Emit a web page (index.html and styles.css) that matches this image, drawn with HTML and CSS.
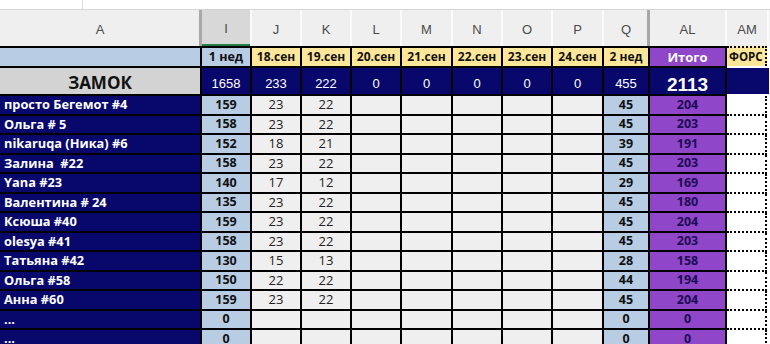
FILE: index.html
```html
<!DOCTYPE html>
<html lang="ru">
<head>
<meta charset="utf-8">
<link rel="stylesheet" href="styles.css">
</head>
<body>
<div class="topbar"><div class="namebox"></div></div>
<div class="colhead">
  <div class="ch">A</div><div class="ch sel frz">I</div><div class="ch">J</div><div class="ch">K</div><div class="ch">L</div><div class="ch">M</div><div class="ch">N</div><div class="ch">O</div><div class="ch">P</div><div class="ch">Q</div><div class="ch frz">AL</div><div class="ch">AM</div><div class="ch"></div>
</div>
<div class="sheet">
  <div class="lb"></div><div class="lb b">1 нед</div><div class="y">18.сен</div><div class="y">19.сен</div><div class="y">20.сен</div><div class="y">21.сен</div><div class="y">22.сен</div><div class="y">23.сен</div><div class="y">24.сен</div><div class="y">2 нед</div><div class="ph">Итого</div><div class="y fh">ФОРС</div>
  <div class="castle">ЗАМОК</div><div class="nv">1658</div><div class="nv">233</div><div class="nv">222</div><div class="nv">0</div><div class="nv">0</div><div class="nv">0</div><div class="nv">0</div><div class="nv">0</div><div class="nv">455</div><div class="nv big">2113</div><div class="nv am"></div>

  <div class="nm">просто Бегемот #4</div><div class="lb b">159</div><div class="e">23</div><div class="e">22</div><div class="e"></div><div class="e"></div><div class="e"></div><div class="e"></div><div class="e"></div><div class="lb b">45</div><div class="t">204</div><div class="f"></div>
  <div class="nm">Ольга # 5</div><div class="lb b">158</div><div class="e">23</div><div class="e">22</div><div class="e"></div><div class="e"></div><div class="e"></div><div class="e"></div><div class="e"></div><div class="lb b">45</div><div class="t">203</div><div class="f"></div>
  <div class="nm">nikaruqa (Ника) #6</div><div class="lb b">152</div><div class="e">18</div><div class="e">21</div><div class="e"></div><div class="e"></div><div class="e"></div><div class="e"></div><div class="e"></div><div class="lb b">39</div><div class="t">191</div><div class="f"></div>
  <div class="nm">Залина&nbsp; #22</div><div class="lb b">158</div><div class="e">23</div><div class="e">22</div><div class="e"></div><div class="e"></div><div class="e"></div><div class="e"></div><div class="e"></div><div class="lb b">45</div><div class="t">203</div><div class="f"></div>
  <div class="nm">Yana #23</div><div class="lb b">140</div><div class="e">17</div><div class="e">12</div><div class="e"></div><div class="e"></div><div class="e"></div><div class="e"></div><div class="e"></div><div class="lb b">29</div><div class="t">169</div><div class="f"></div>
  <div class="nm">Валентина # 24</div><div class="lb b">135</div><div class="e">23</div><div class="e">22</div><div class="e"></div><div class="e"></div><div class="e"></div><div class="e"></div><div class="e"></div><div class="lb b">45</div><div class="t">180</div><div class="f"></div>
  <div class="nm">Ксюша #40</div><div class="lb b">159</div><div class="e">23</div><div class="e">22</div><div class="e"></div><div class="e"></div><div class="e"></div><div class="e"></div><div class="e"></div><div class="lb b">45</div><div class="t">204</div><div class="f"></div>
  <div class="nm">olesya #41</div><div class="lb b">158</div><div class="e">23</div><div class="e">22</div><div class="e"></div><div class="e"></div><div class="e"></div><div class="e"></div><div class="e"></div><div class="lb b">45</div><div class="t">203</div><div class="f"></div>
  <div class="nm">Татьяна #42</div><div class="lb b">130</div><div class="e">15</div><div class="e">13</div><div class="e"></div><div class="e"></div><div class="e"></div><div class="e"></div><div class="e"></div><div class="lb b">28</div><div class="t">158</div><div class="f"></div>
  <div class="nm">Ольга #58</div><div class="lb b">150</div><div class="e">22</div><div class="e">22</div><div class="e"></div><div class="e"></div><div class="e"></div><div class="e"></div><div class="e"></div><div class="lb b">44</div><div class="t">194</div><div class="f"></div>
  <div class="nm">Анна #60</div><div class="lb b">159</div><div class="e">23</div><div class="e">22</div><div class="e"></div><div class="e"></div><div class="e"></div><div class="e"></div><div class="e"></div><div class="lb b">45</div><div class="t">204</div><div class="f"></div>
  <div class="nm">...</div><div class="lb b">0</div><div class="e"></div><div class="e"></div><div class="e"></div><div class="e"></div><div class="e"></div><div class="e"></div><div class="e"></div><div class="lb b">0</div><div class="t">0</div><div class="f"></div>
  <div class="nm">...</div><div class="lb b">0</div><div class="e"></div><div class="e"></div><div class="e"></div><div class="e"></div><div class="e"></div><div class="e"></div><div class="e"></div><div class="lb b">0</div><div class="t">0</div><div class="f"></div>
</div>
</body>
</html>
```

FILE: styles.css
```css
* { box-sizing: border-box; }
html, body { margin: 0; padding: 0; background: #fff; }
body {
  width: 770px;
  height: 344px;
  overflow: hidden;
  font-family: "Open Sans", "Noto Sans", sans-serif;
}
.topbar {
  height: 10px;
  border-bottom: 1px solid #d6d6d6;
  background: #fff;
}
.namebox {
  width: 83px;
  height: 9px;
  border-right: 1px solid #dcdcdc;
}
.colhead {
  display: grid;
  grid-template-columns: 200px 48px 48px 48px 48px 49px 48px 48px 49px 44px 75px 40px 1fr;
  column-gap: 2px;
  height: 36px;
  background: #fbfbfb;
}
.ch {
  background: #efefef;
  color: #4a4a4a;
  font-family: "Liberation Sans", Arial, sans-serif;
  font-size: 13px;
  display: flex;
  align-items: center;
  justify-content: center;
  padding-top: 3px;
}
.ch.frz { box-shadow: -3px 0 0 #a8a8a8; }
.ch.sel {
  background: #d8d8d8;
  border-bottom: 2px solid #21804a;
}
.sheet {
  display: grid;
  grid-template-columns: 200px 48px 48px 48px 48px 49px 48px 48px 49px 44px 75px 40px;
  grid-template-rows: 18px 26px;
  grid-auto-rows: 17.5px;
  gap: 2px;
  padding-top: 2px;
  width: 767px;
  background: linear-gradient(to right, #000 727px, #fff 727px);
}
.sheet > div {
  display: flex;
  align-items: center;
  justify-content: center;
  font-size: 12.5px;
  line-height: 1;
  white-space: nowrap;
  overflow: hidden;
}
.lb { background: #b8cce4; color: #111; }
.b { font-weight: 700; }
.y { background: #ffe699; color: #111; font-weight: 700; font-size: 12px !important; }
.ph { background: #8f46c8; color: #fff; font-weight: 700; font-size: 13px !important; }
.fh {
  margin-top: -2px;
  border-top: 2px dotted #000;
  border-right: 2px dotted #000;
  justify-content: flex-start !important;
  padding-left: 2px;
  font-size: 11.5px !important;
}
.castle {
  background: #d3d3d3;
  color: #111;
  font-weight: 700;
  font-size: 17px !important;
  padding-top: 2px;
}
.nv {
  background: #07076c;
  color: #fff;
  font-family: "Liberation Sans", Arial, sans-serif;
  font-size: 13px !important;
  padding-top: 5px;
}
.nv.big { font-weight: 700; font-size: 19px !important; padding-top: 6px; }
.nv.am { margin-right: -2px; }
.nm {
  background: #07076c;
  color: #fff;
  font-weight: 700;
  font-size: 12.8px !important;
  justify-content: flex-start !important;
  padding-left: 4px;
}
.e { background: #efefef; color: #222; font-size: 13px !important; }
.t { background: #8f46c8; color: #1c0b55; font-weight: 700; }
.f {
  background: #fff;
  margin-bottom: -2px;
  border-bottom: 2px dotted #000;
  border-right: 2px dotted #000;
}
```
